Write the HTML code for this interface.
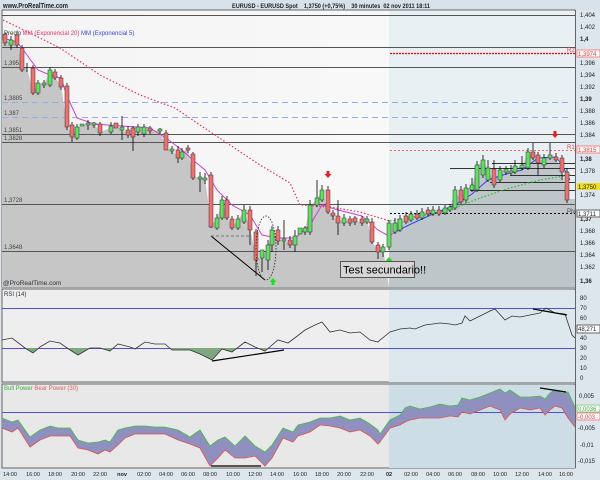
<!DOCTYPE html>
<html><head><meta charset="utf-8"><style>
html,body{margin:0;padding:0;background:#dce6ec;}
svg{display:block;font-family:"Liberation Sans",sans-serif;}
</style></head><body>
<svg width="600" height="480" viewBox="0 0 600 480" xmlns="http://www.w3.org/2000/svg">
<defs>
<clipPath id="rsiC"><rect x="2" y="348" width="573" height="35"/></clipPath>
<linearGradient id="bgL" x1="0" y1="0" x2="1" y2="0"><stop offset="0" stop-color="#f4f4f4"/><stop offset="1" stop-color="#fafafa"/></linearGradient>
</defs>
<rect width="600" height="480" fill="#dce6ec"/>
<!-- title bar -->
<rect x="0" y="0" width="600" height="10" fill="#d8e2ea"/>
<text x="3" y="8" font-size="7.5" font-weight="bold" fill="#222" textLength="65" lengthAdjust="spacingAndGlyphs">www.ProRealTime.com</text>
<text x="232" y="8" font-size="6.5" font-weight="bold" fill="#222" textLength="198" lengthAdjust="spacingAndGlyphs" xml:space="preserve">EURUSD - EURUSD Spot    1,3750 (+0,75%)    30 minutes  02 nov 2011 18:11</text>

<!-- price panel -->
<rect x="2" y="10" width="573" height="277" fill="url(#bgL)" stroke="#666" stroke-width="1"/>
<rect x="389" y="11" width="186" height="276" fill="#e8f0f4"/>
<polygon fill="#c6c6c6" points="2,287 2,40 5,40 11,43 17,38 22,68 27,68 33,92 38,84 44,84 50,72 55,77 61,86 67,126 72,135 77,128 82,125 88,124 94,124 100,132 106,130 111,127 116,127 122,129 128,134 133,135 138,128 144,128 150,130 155,131 160,130 166,149 172,150 178,157 182,152 188,149 193,177 200,178 205,178 211,225 217,219 222,201 227,216 232,227 238,220 244,211 250,228 256,258 262,258 268,246 272,231 278,240 284,240 290,244 295,237 300,233 305,230 310,206 317,199 322,191 328,211 333,215 338,222 344,219 350,222 355,221 362,222 367,220 372,241 378,251 383,248 389,287"/>
<polygon fill="#bfc6ca" points="389,287 389,224 395,223 400,220 406,221 411,215 417,217 422,213 428,213 433,211 439,213 445,209 450,208 455,191 461,200 466,189 472,186 477,166 483,161 488,169 494,183 500,171 506,170 511,172 515,167 522,166 528,153 533,157 538,162 544,159 550,156 556,159 562,171 567,199 572,199 575,199 575,287"/>
<g stroke="#555" stroke-width="1">
<line x1="2" y1="15.5" x2="575" y2="15.5"/>
<line x1="2" y1="47.5" x2="575" y2="47.5"/>
<line x1="2" y1="67.5" x2="575" y2="67.5"/>
<line x1="2" y1="134.5" x2="575" y2="134.5"/>
<line x1="2" y1="142.5" x2="575" y2="142.5"/>
<line x1="2" y1="204.5" x2="575" y2="204.5"/>
<line x1="2" y1="251.5" x2="575" y2="251.5"/>
</g>
<g stroke="#8fb0f0" stroke-width="1" stroke-dasharray="6,4">
<line x1="2" y1="102.5" x2="572" y2="102.5"/>
<line x1="2" y1="117.5" x2="572" y2="117.5"/>
</g>
<line x1="390" y1="53.5" x2="575" y2="53.5" stroke="#e00" stroke-width="1.3" stroke-dasharray="2,1"/>
<line x1="390" y1="150.5" x2="575" y2="150.5" stroke="#f66" stroke-width="1" stroke-dasharray="2,2"/>
<line x1="390" y1="213.5" x2="575" y2="213.5" stroke="#000" stroke-width="1" stroke-dasharray="2,2"/>
<g stroke="#333" stroke-width="1">
<line x1="510" y1="175.5" x2="575" y2="175.5"/><line x1="490" y1="182.5" x2="575" y2="182.5"/><line x1="470" y1="190.5" x2="575" y2="190.5"/>
<line x1="450" y1="168.5" x2="575" y2="168.5"/><line x1="492" y1="163.5" x2="575" y2="163.5"/>
</g>
<g font-size="6" fill="#444">
<text x="4" y="65">1,3953</text><text x="4" y="100">1,3885</text><text x="4" y="115">1,387</text><text x="4" y="132">1,3851</text><text x="4" y="140">1,3828</text><text x="4" y="202">1,3728</text><text x="4" y="249">1,3648</text>
<text x="567" y="52" fill="#e44">R2</text><text x="567" y="149" fill="#e44">R1</text><text x="567" y="213">Piv</text>
</g>
<polyline fill="none" stroke="#e0306a" stroke-width="1.2" stroke-dasharray="1.5,2" points="3,20 30,33 60,48 100,75 140,95 175,108 200,125 230,145 260,165 290,183 300,205 330,207 360,212 390,221"/>
<polyline fill="none" stroke="#20c020" stroke-width="1.2" stroke-dasharray="1.5,2" points="390,221 420,216 450,210 480,198 510,188 540,180 570,175"/>
<polyline fill="none" stroke="#d040d0" stroke-width="1" points="3,38 17,42 27,55 38,70 50,75 61,78 67,96 77,118 94,124 122,126 150,128 166,138 182,150 193,160 205,170 217,190 232,205 250,215 262,235 278,238 295,238 310,225 322,205 338,210 362,216 378,230 389,236 395,232"/>
<polyline fill="none" stroke="#3344ee" stroke-width="1" points="395,232 411,224 433,214 455,205 472,194 488,180 506,174 522,170 538,158 556,157 562,165 570,180"/>
<g stroke="#000" stroke-width="0.8">
<line x1="5" y1="32" x2="5" y2="46"/><line x1="11" y1="36" x2="11" y2="50"/><line x1="17" y1="31" x2="17" y2="48"/><line x1="22" y1="45" x2="22" y2="72"/><line x1="27" y1="63" x2="27" y2="72"/><line x1="33" y1="65" x2="33" y2="95"/><line x1="38" y1="80" x2="38" y2="95"/><line x1="44" y1="80" x2="44" y2="88"/><line x1="50" y1="67" x2="50" y2="87"/><line x1="55" y1="69" x2="55" y2="80"/><line x1="61" y1="75" x2="61" y2="90"/><line x1="67" y1="83" x2="67" y2="130"/><line x1="72" y1="122" x2="72" y2="142"/><line x1="77" y1="124" x2="77" y2="140"/><line x1="88" y1="120" x2="88" y2="130"/><line x1="94" y1="122" x2="94" y2="128"/><line x1="100" y1="122" x2="100" y2="136"/><line x1="111" y1="122" x2="111" y2="134"/><line x1="122" y1="116" x2="122" y2="140"/><line x1="128" y1="126" x2="128" y2="138"/><line x1="133" y1="126" x2="133" y2="151"/><line x1="138" y1="124" x2="138" y2="136"/><line x1="144" y1="124" x2="144" y2="137"/><line x1="150" y1="126" x2="150" y2="134"/><line x1="160" y1="128" x2="160" y2="134"/><line x1="166" y1="130" x2="166" y2="150"/>
<line x1="172" y1="146" x2="172" y2="154"/><line x1="178" y1="146" x2="178" y2="163"/><line x1="182" y1="148" x2="182" y2="160"/><line x1="188" y1="145" x2="188" y2="153"/><line x1="193" y1="152" x2="193" y2="180"/><line x1="200" y1="172" x2="200" y2="192"/><line x1="205" y1="173" x2="205" y2="184"/><line x1="211" y1="172" x2="211" y2="228"/><line x1="217" y1="214" x2="217" y2="230"/><line x1="222" y1="196" x2="222" y2="220"/><line x1="227" y1="196" x2="227" y2="220"/><line x1="232" y1="216" x2="232" y2="230"/><line x1="238" y1="215" x2="238" y2="230"/><line x1="244" y1="205" x2="244" y2="224"/><line x1="250" y1="206" x2="250" y2="245"/><line x1="256" y1="229" x2="256" y2="276"/><line x1="262" y1="252" x2="262" y2="272"/><line x1="268" y1="240" x2="268" y2="270"/><line x1="272" y1="226" x2="272" y2="252"/><line x1="278" y1="226" x2="278" y2="245"/><line x1="284" y1="220" x2="284" y2="250"/><line x1="290" y1="236" x2="290" y2="248"/><line x1="295" y1="230" x2="295" y2="252"/>
<line x1="305" y1="226" x2="305" y2="235"/><line x1="310" y1="200" x2="310" y2="235"/><line x1="317" y1="180" x2="317" y2="207"/><line x1="322" y1="185" x2="322" y2="202"/><line x1="328" y1="186" x2="328" y2="214"/><line x1="333" y1="210" x2="333" y2="220"/><line x1="338" y1="200" x2="338" y2="235"/><line x1="344" y1="214" x2="344" y2="226"/><line x1="350" y1="216" x2="350" y2="226"/><line x1="355" y1="216" x2="355" y2="225"/><line x1="362" y1="216" x2="362" y2="226"/><line x1="367" y1="216" x2="367" y2="224"/><line x1="372" y1="218" x2="372" y2="244"/><line x1="378" y1="242" x2="378" y2="259"/><line x1="383" y1="244" x2="383" y2="257"/><line x1="389" y1="220" x2="389" y2="250"/><line x1="395" y1="218" x2="395" y2="234"/><line x1="400" y1="215" x2="400" y2="232"/><line x1="406" y1="212" x2="406" y2="224"/><line x1="411" y1="211" x2="411" y2="222"/><line x1="417" y1="210" x2="417" y2="220"/><line x1="422" y1="208" x2="422" y2="220"/><line x1="428" y1="207" x2="428" y2="216"/><line x1="433" y1="206" x2="433" y2="216"/><line x1="439" y1="206" x2="439" y2="216"/><line x1="445" y1="205" x2="445" y2="215"/><line x1="450" y1="204" x2="450" y2="212"/><line x1="455" y1="186" x2="455" y2="210"/><line x1="461" y1="186" x2="461" y2="204"/><line x1="466" y1="184" x2="466" y2="203"/><line x1="472" y1="178" x2="472" y2="192"/><line x1="477" y1="161" x2="477" y2="192"/><line x1="483" y1="155" x2="483" y2="178"/><line x1="488" y1="160" x2="488" y2="182"/><line x1="494" y1="160" x2="494" y2="188"/><line x1="500" y1="166" x2="500" y2="182"/><line x1="506" y1="166" x2="506" y2="175"/><line x1="511" y1="165" x2="511" y2="175"/><line x1="515" y1="160" x2="515" y2="174"/><line x1="522" y1="156" x2="522" y2="170"/><line x1="528" y1="148" x2="528" y2="170"/><line x1="533" y1="143" x2="533" y2="160"/><line x1="538" y1="152" x2="538" y2="175"/><line x1="544" y1="154" x2="544" y2="168"/><line x1="550" y1="143" x2="550" y2="160"/><line x1="556" y1="153" x2="556" y2="162"/><line x1="562" y1="155" x2="562" y2="180"/><line x1="567" y1="168" x2="567" y2="203"/>
</g>
<g stroke="#333" stroke-width="0.5">
<g fill="#f07070">
<rect x="3" y="34" width="4" height="9"/><rect x="15" y="35" width="4" height="10"/><rect x="20" y="48" width="4" height="22"/><rect x="31" y="68" width="4" height="25"/><rect x="53" y="72" width="4" height="6"/><rect x="59" y="78" width="4" height="9"/><rect x="65" y="86" width="4" height="41"/><rect x="70" y="125" width="4" height="12"/><rect x="98" y="124" width="4" height="9"/><rect x="114" y="123" width="4" height="5"/><rect x="126" y="130" width="4" height="5"/><rect x="131" y="128" width="4" height="9"/><rect x="148" y="128" width="4" height="3"/><rect x="164" y="133" width="4" height="17"/>
<rect x="176" y="150" width="4" height="8"/><rect x="186" y="148" width="4" height="2"/><rect x="191" y="154" width="4" height="24"/><rect x="209" y="175" width="4" height="52"/><rect x="225" y="200" width="4" height="18"/><rect x="230" y="219" width="4" height="9"/><rect x="248" y="210" width="4" height="20"/><rect x="254" y="232" width="4" height="28"/><rect x="276" y="230" width="4" height="11"/><rect x="288" y="240" width="4" height="5"/>
<rect x="326" y="190" width="4" height="22"/><rect x="331" y="213" width="4" height="3"/><rect x="336" y="216" width="4" height="7"/><rect x="348" y="219" width="4" height="4"/><rect x="353" y="218" width="4" height="4"/><rect x="360" y="219" width="4" height="4"/><rect x="370" y="222" width="4" height="20"/><rect x="376" y="245" width="4" height="7"/>
<rect x="404" y="216" width="4" height="6"/><rect x="415" y="214" width="4" height="4"/><rect x="426" y="210" width="4" height="4"/><rect x="437" y="210" width="4" height="4"/><rect x="459" y="190" width="4" height="12"/><rect x="492" y="169" width="4" height="16"/><rect x="531" y="152" width="4" height="6"/><rect x="536" y="155" width="4" height="8"/><rect x="554" y="157" width="4" height="3"/><rect x="560" y="158" width="4" height="14"/><rect x="565" y="172" width="4" height="28"/>
</g>
<g fill="#60e060">
<rect x="9" y="40" width="4" height="5"/><rect x="36" y="83" width="4" height="10"/><rect x="42" y="83" width="4" height="2"/><rect x="48" y="70" width="4" height="15"/><rect x="75" y="127" width="4" height="11"/><rect x="80" y="124" width="4" height="2"/><rect x="86" y="123" width="4" height="2"/><rect x="92" y="123" width="4" height="2"/><rect x="109" y="126" width="4" height="6"/><rect x="120" y="127" width="4" height="3"/><rect x="136" y="127" width="4" height="5"/><rect x="142" y="127" width="4" height="7"/><rect x="158" y="129" width="4" height="2"/>
<rect x="170" y="149" width="4" height="2"/><rect x="180" y="152" width="4" height="6"/><rect x="198" y="177" width="4" height="2"/><rect x="203" y="178" width="4" height="2"/><rect x="215" y="218" width="4" height="10"/><rect x="220" y="200" width="4" height="18"/><rect x="236" y="219" width="4" height="9"/><rect x="242" y="210" width="4" height="12"/><rect x="260" y="250" width="4" height="8"/><rect x="266" y="245" width="4" height="15"/><rect x="270" y="230" width="4" height="15"/><rect x="282" y="239" width="4" height="2"/><rect x="293" y="236" width="4" height="9"/>
<rect x="298" y="228" width="4" height="6"/><rect x="303" y="228" width="4" height="4"/><rect x="308" y="205" width="4" height="27"/><rect x="315" y="198" width="4" height="7"/><rect x="320" y="190" width="4" height="10"/><rect x="342" y="218" width="4" height="5"/><rect x="365" y="219" width="4" height="3"/><rect x="381" y="247" width="4" height="5"/><rect x="387" y="223" width="4" height="24"/><rect x="393" y="223" width="4" height="9"/><rect x="398" y="219" width="4" height="11"/><rect x="409" y="214" width="4" height="6"/><rect x="420" y="212" width="4" height="6"/><rect x="431" y="210" width="4" height="4"/><rect x="443" y="208" width="4" height="5"/><rect x="448" y="207" width="4" height="3"/><rect x="453" y="190" width="4" height="18"/><rect x="464" y="188" width="4" height="12"/><rect x="470" y="185" width="4" height="5"/><rect x="475" y="165" width="4" height="25"/><rect x="481" y="160" width="4" height="15"/><rect x="486" y="168" width="4" height="12"/><rect x="498" y="170" width="4" height="10"/><rect x="504" y="169" width="4" height="3"/><rect x="509" y="171" width="4" height="2"/><rect x="513" y="166" width="4" height="6"/><rect x="520" y="165" width="4" height="3"/><rect x="526" y="152" width="4" height="16"/><rect x="542" y="158" width="4" height="7"/><rect x="548" y="155" width="4" height="3"/>
</g>
</g>
<polyline fill="none" stroke="#000" stroke-width="1" points="211,236 265,280"/>
<line x1="211" y1="236" x2="250" y2="236" stroke="#777" stroke-width="1" stroke-dasharray="3,2"/>
<ellipse cx="266" cy="248" rx="10" ry="32" fill="none" stroke="#222" stroke-width="0.8" stroke-dasharray="1.5,1.5"/>
<polygon fill="#22dd22" points="273,278 276.5,282 274.5,282 274.5,285 271.5,285 271.5,282 269.5,282"/>
<polygon fill="#22dd22" points="389,257 392.5,261 390.5,261 390.5,264 387.5,264 387.5,261 385.5,261"/>
<polygon fill="#e02020" points="326.5,171 329.5,171 329.5,174 331.5,174 328,178 324.5,174 326.5,174"/>
<polygon fill="#e02020" points="553.5,131 556.5,131 556.5,134 558.5,134 555,138 551.5,134 553.5,134"/>
<rect x="340.5" y="261.5" width="74" height="16" fill="#d6d6d6" stroke="#555"/>
<text x="343" y="273.5" font-size="11" fill="#000">Test secundario!!</text>
<text x="4" y="35" font-size="6" fill="#333"><tspan>Precio</tspan><tspan fill="#e0306a"> MM (Exponencial 20)</tspan><tspan fill="#3344ee"> MM (Exponencial 5)</tspan></text>
<text x="3" y="285" font-size="6.5" fill="#333">@ProRealTime.com</text>

<rect x="2" y="289" width="573" height="93" fill="#eeeeee" stroke="#666"/>
<rect x="389" y="290" width="186" height="92" fill="#dde8ee"/>
<line x1="2" y1="308.5" x2="575" y2="308.5" stroke="#5050e0"/>
<line x1="2" y1="348.5" x2="575" y2="348.5" stroke="#5050e0"/>
<polygon clip-path="url(#rsiC)" fill="#80a880" stroke="none" points="2,340 12,338 25,348 33,353 40,347 50,341 60,343 70,350 78,355 90,348 100,348 110,351 118,344 130,347 135,349 145,342 155,344 165,344 172,350 180,350 190,350 200,354 212,360 222,349 232,352 245,342 255,347 265,351 278,340 288,343 296,337 296,348 2,348"/>
<polyline fill="none" stroke="#333" stroke-width="0.8" points="2,340 12,338 25,348 33,353 40,347 50,341 60,343 70,350 78,355 90,348 100,348 110,351 118,344 130,347 135,349 145,342 155,344 165,344 172,350 180,350 190,350 200,354 212,360 222,349 232,352 245,342 255,347 265,351 278,340 288,343 296,337 305,330 315,325 322,322 330,332 340,330 350,333 360,332 370,340 378,342 380,340 390,332 400,329 410,328 415,329 425,325 440,323 450,324 455,325 462,323 465,316 470,321 480,316 490,311 495,309 505,320 512,316 520,317 530,315 540,313 546,308 555,313 565,314 572,335 575,338"/>
<line x1="212" y1="361" x2="284" y2="350" stroke="#000" stroke-width="1.2"/>
<line x1="533" y1="309" x2="567" y2="315" stroke="#000" stroke-width="1.2"/>
<text x="4" y="296" font-size="6" fill="#333">RSI (14)</text>

<rect x="2" y="384" width="573" height="84" fill="#e8e8e8" stroke="#666"/>
<rect x="389" y="385" width="186" height="83" fill="#ccdde6"/>
<line x1="2" y1="412.5" x2="575" y2="412.5" stroke="#5050e0"/>
<polygon fill="#9090c0" points="2,418 12,422 18,420 30,437 40,430 50,426 58,428 70,428 78,440 88,443 98,442 105,440 110,442 118,430 125,428 135,426 145,426 155,427 165,427 178,430 190,437 200,430 210,446 218,440 225,437 235,446 245,436 255,446 265,452 272,445 283,428 293,432 298,425 310,422 320,418 330,418 340,416 350,420 360,418 370,424 378,430 380,434 390,420 400,415 405,408 410,406 420,409 430,407 440,404 450,406 458,405 462,398 470,400 480,397 490,393 500,389 505,393 510,390 520,397 530,397 540,396 545,399 550,393 555,390 562,393 568,392 575,407 575,427 568,418 562,408 555,406 550,410 545,415 540,408 530,410 520,408 510,414 505,420 500,410 490,406 480,410 470,414 462,412 458,417 450,416 440,418 430,418 420,418 410,420 405,422 400,425 390,428 380,442 378,444 370,436 360,430 350,432 340,428 330,426 320,425 310,432 298,436 293,442 283,438 272,458 265,466 255,456 245,458 235,458 225,450 218,458 210,466 200,448 190,444 178,440 165,434 155,434 145,434 135,434 125,438 118,445 110,452 105,450 98,454 88,450 78,448 70,436 58,436 50,436 40,440 30,447 18,428 12,432 2,428"/>
<polyline fill="none" stroke="#40c040" stroke-width="0.8" points="2,418 12,422 18,420 30,437 40,430 50,426 58,428 70,428 78,440 88,443 98,442 105,440 110,442 118,430 125,428 135,426 145,426 155,427 165,427 178,430 190,437 200,430 210,446 218,440 225,437 235,446 245,436 255,446 265,452 272,445 283,428 293,432 298,425 310,422 320,418 330,418 340,416 350,420 360,418 370,424 378,430 380,434 390,420 400,415 405,408 410,406 420,409 430,407 440,404 450,406 458,405 462,398 470,400 480,397 490,393 500,389 505,393 510,390 520,397 530,397 540,396 545,399 550,393 555,390 562,393 568,392 575,407"/>
<polyline fill="none" stroke="#e05050" stroke-width="0.8" points="575,427 568,418 562,408 555,406 550,410 545,415 540,408 530,410 520,408 510,414 505,420 500,410 490,406 480,410 470,414 462,412 458,417 450,416 440,418 430,418 420,418 410,420 405,422 400,425 390,428 380,442 378,444 370,436 360,430 350,432 340,428 330,426 320,425 310,432 298,436 293,442 283,438 272,458 265,466 255,456 245,458 235,458 225,450 218,458 210,466 200,448 190,444 178,440 165,434 155,434 145,434 135,434 125,438 118,445 110,452 105,450 98,454 88,450 78,448 70,436 58,436 50,436 40,440 30,447 18,428 12,432 2,428"/>
<line x1="211" y1="466" x2="261" y2="466" stroke="#000" stroke-width="1.2"/>
<line x1="540" y1="388" x2="566" y2="392" stroke="#000" stroke-width="1.2"/>
<text x="4" y="390" font-size="6"><tspan fill="#40b040">Bull Power</tspan><tspan fill="#e06060"> Bear Power (30)</tspan></text>

<line x1="575.5" y1="10" x2="575.5" y2="468" stroke="#666"/>
<g font-size="6" fill="#222">
<text x="580" y="17">1,404</text><text x="580" y="29">1,402</text><text x="580" y="41" font-weight="bold">1,4</text><text x="580" y="65">1,396</text><text x="580" y="77">1,394</text><text x="580" y="89">1,392</text><text x="580" y="101" font-weight="bold">1,39</text><text x="580" y="113">1,388</text><text x="580" y="125">1,386</text><text x="580" y="137">1,384</text><text x="580" y="161" font-weight="bold">1,38</text><text x="580" y="173">1,378</text><text x="580" y="197">1,374</text><text x="580" y="221" font-weight="bold">1,37</text><text x="580" y="233">1,368</text><text x="580" y="245">1,366</text><text x="580" y="257">1,364</text><text x="580" y="269">1,362</text><text x="580" y="283" font-weight="bold">1,36</text>
<text x="580" y="300">80</text><text x="580" y="310">70</text><text x="580" y="320">60</text><text x="580" y="340">40</text><text x="580" y="350">30</text><text x="580" y="360">20</text><text x="580" y="370">10</text><text x="580" y="380">0</text>
<text x="579" y="398">0,005</text><text x="580" y="414">0</text><text x="578" y="430">-0,005</text><text x="580" y="447">-0,01</text><text x="578" y="463">-0,015</text>
</g>
<g font-size="6">
<rect x="577" y="50" width="23" height="7" fill="#fff" stroke="#e88"/><text x="578" y="56" fill="#e33">1,3974</text>
<rect x="577" y="146" width="23" height="7" fill="#fff" stroke="#e88"/><text x="578" y="152" fill="#e33">1,3815</text>
<rect x="577" y="183" width="23" height="7" fill="#f0e020"/><text x="578" y="189" fill="#222">1,3750</text>
<rect x="577" y="210" width="23" height="7" fill="#fff" stroke="#666"/><text x="578" y="216" fill="#222">1,3711</text>
<rect x="577" y="325" width="23" height="8" fill="#fff" stroke="#666"/><text x="578" y="331" fill="#222">48,271</text>
<rect x="577" y="405" width="23" height="7" fill="#fff" stroke="#8c8"/><text x="578" y="411" fill="#3a3">0,0036</text>
<rect x="577" y="413" width="23" height="7" fill="#fff" stroke="#e88"/><text x="578" y="419" fill="#e33">-0,003</text>
</g>
<g font-size="5.5" fill="#222" text-anchor="middle">
<text x="10" y="476">14:00</text><text x="33" y="476">16:00</text><text x="55" y="476">18:00</text><text x="78" y="476">20:00</text><text x="100" y="476">22:00</text><text x="122" y="476" font-weight="bold">nov</text><text x="144" y="476">02:00</text><text x="166" y="476">04:00</text><text x="188" y="476">06:00</text><text x="210" y="476">08:00</text><text x="233" y="476">10:00</text><text x="255" y="476">12:00</text><text x="277" y="476">14:00</text><text x="300" y="476">16:00</text><text x="322" y="476">18:00</text><text x="344" y="476">20:00</text><text x="367" y="476">22:00</text><text x="389" y="476" font-weight="bold">02</text><text x="411" y="476">02:00</text><text x="433" y="476">04:00</text><text x="455" y="476">06:00</text><text x="478" y="476">08:00</text><text x="500" y="476">10:00</text><text x="522" y="476">12:00</text><text x="545" y="476">14:00</text><text x="566" y="476">16:00</text>
</g>
</svg>
</body></html>
